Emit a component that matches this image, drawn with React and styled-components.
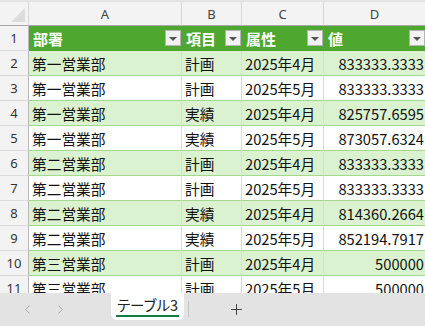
import styled, { createGlobalStyle } from "styled-components";
import { ChevronLeft, ChevronRight, Plus } from "lucide-react";

const GlobalStyle = createGlobalStyle`
  html, body {
    margin: 0;
    padding: 0;
    background: #ffffff;
    overflow: hidden;
  }
`;

const COLS = "29px 153px 60px 82px 102px";
const JP = `"Noto Sans CJK JP", "Noto Sans", sans-serif`;

const rows = [
  ["第一営業部", "計画", "2025年4月", "833333.3333"],
  ["第一営業部", "計画", "2025年5月", "833333.3333"],
  ["第一営業部", "実績", "2025年4月", "825757.6595"],
  ["第一営業部", "実績", "2025年5月", "873057.6324"],
  ["第二営業部", "計画", "2025年4月", "833333.3333"],
  ["第二営業部", "計画", "2025年5月", "833333.3333"],
  ["第二営業部", "実績", "2025年4月", "814360.2664"],
  ["第二営業部", "実績", "2025年5月", "852194.7917"],
  ["第三営業部", "計画", "2025年4月", "500000"],
  ["第三営業部", "計画", "2025年5月", "500000"],
];

const headers = ["部署", "項目", "属性", "値"];

const Window = styled.div`
  width: 425px;
  height: 326px;
  display: flex;
  flex-direction: column;
  overflow: hidden;
`;

const Sheet = styled.div`
  flex: 1;
  min-height: 0;
  overflow: hidden;
  background: #ffffff;
`;

const Grid = styled.div`
  display: grid;
  grid-template-columns: ${COLS};
  grid-template-rows: 26px;
  grid-auto-rows: 25px;
  width: 426px;
`;

const Corner = styled.div`
  position: relative;
  background: #f3f3f3;
  border-top: 2px solid #e4e4e4;
  border-bottom: 1px solid #a8a8a8;
  border-right: 1px solid #d6d6d6;
  box-sizing: border-box;

  &::after {
    content: "";
    position: absolute;
    right: 3px;
    bottom: 3px;
    border-style: solid;
    border-width: 0 0 14px 14px;
    border-color: transparent transparent #dcdcdc transparent;
  }
`;

const ColHead = styled.div`
  background: #f3f3f3;
  border-top: 2px solid #e4e4e4;
  border-bottom: 1px solid #a8a8a8;
  border-right: 1px solid #d6d6d6;
  box-sizing: border-box;
  display: flex;
  align-items: center;
  justify-content: center;
  font-family: "Noto Sans", "Liberation Sans", sans-serif;
  font-size: 13px;
  color: #444444;
`;

const RowHead = styled.div`
  background: #f3f3f3;
  border-bottom: 1px solid #dcdcdc;
  border-right: 1px solid #b8b8b8;
  box-sizing: border-box;
  display: flex;
  align-items: center;
  justify-content: center;
  font-family: "Noto Sans", "Liberation Sans", sans-serif;
  font-size: 13px;
  color: #333333;
`;

const HeadCell = styled.div`
  background: #4ea72e;
  border-bottom: 1px solid #4ea72e;
  box-sizing: border-box;
  display: flex;
  align-items: center;
  justify-content: space-between;
  padding: 0 1px 0 4px;
  font-family: ${JP};
  font-size: 15px;
  font-weight: 700;
  color: #ffffff;
  overflow: hidden;
  white-space: nowrap;
`;

const FilterButton = styled.span`
  flex: none;
  width: 16px;
  height: 16px;
  box-sizing: border-box;
  background: #f2f2f2;
  border: 1px solid #b4b4b4;
  display: flex;
  align-items: center;
  justify-content: center;

  &::before {
    content: "";
    border-style: solid;
    border-width: 4px 4px 0 4px;
    border-color: #555555 transparent transparent transparent;
    margin-top: 1px;
  }
`;

const Cell = styled.div`
  background: ${(p) => (p.$band ? "#daf2d0" : "#ffffff")};
  border-bottom: 1px solid #a3d98d;
  border-right: 1px solid ${(p) => (p.$band ? "#cde6c3" : "#dadada")};
  box-sizing: border-box;
  display: flex;
  align-items: center;
  justify-content: ${(p) => (p.$num ? "flex-end" : "flex-start")};
  padding: 0 ${(p) => (p.$num ? "1px" : "0")} 0 3px;
  font-family: ${JP};
  font-size: 14.7px;
  color: #111111;
  overflow: hidden;
  white-space: nowrap;
`;

const TabBar = styled.div`
  flex: none;
  height: 33px;
  background: #e3e3e3;
  display: flex;
  align-items: flex-start;
`;

const NavArrows = styled.div`
  flex: none;
  display: flex;
  align-items: center;
  gap: 18px;
  height: 33px;
  padding-left: 20px;
  width: 111px;
  box-sizing: border-box;
  color: #a3a3a3;
`;

const Tab = styled.div`
  flex: none;
  width: 73px;
  height: 27px;
  background: #ffffff;
  border-radius: 0 0 6px 6px;
  display: flex;
  flex-direction: column;
  align-items: center;
  justify-content: flex-end;
  padding-bottom: 3px;
  box-sizing: border-box;
`;

const TabLabel = styled.span`
  font-family: ${JP};
  font-feature-settings: "palt";
  font-size: 14.5px;
  line-height: 19px;
  white-space: nowrap;
  color: #222222;
  padding: 0 1px 1px;
  border-bottom: 2px solid #107c41;
`;

const Divider = styled.div`
  flex: none;
  width: 1px;
  height: 16px;
  margin: 8px 0 0 4px;
  background: #c4c4c4;
`;

const AddButton = styled.div`
  height: 33px;
  margin-left: 39px;
  display: flex;
  align-items: center;
  color: #333333;
`;

export default function App() {
  return (
    <Window>
      <GlobalStyle />
      <Sheet>
        <Grid>
          <Corner />
          {["A", "B", "C", "D"].map((c) => (
            <ColHead key={c}>{c}</ColHead>
          ))}
          <RowHead>1</RowHead>
          {headers.map((h) => (
            <HeadCell key={h}>
              <span>{h}</span>
              <FilterButton />
            </HeadCell>
          ))}
          {rows.map((r, i) => (
            <RowLine key={i} n={i + 2} cells={r} band={i % 2 === 0} />
          ))}
        </Grid>
      </Sheet>
      <TabBar>
        <NavArrows>
          <ChevronLeft size={15} strokeWidth={1.5} />
          <ChevronRight size={15} strokeWidth={1.5} />
        </NavArrows>
        <Tab>
          <TabLabel>テーブル3</TabLabel>
        </Tab>
        <Divider />
        <AddButton>
          <Plus size={17} strokeWidth={1.3} />
        </AddButton>
      </TabBar>
    </Window>
  );
}

function RowLine({ n, cells, band }) {
  return (
    <>
      <RowHead>{n}</RowHead>
      {cells.map((v, j) => (
        <Cell key={j} $band={band} $num={j === 3}>
          {v}
        </Cell>
      ))}
    </>
  );
}
